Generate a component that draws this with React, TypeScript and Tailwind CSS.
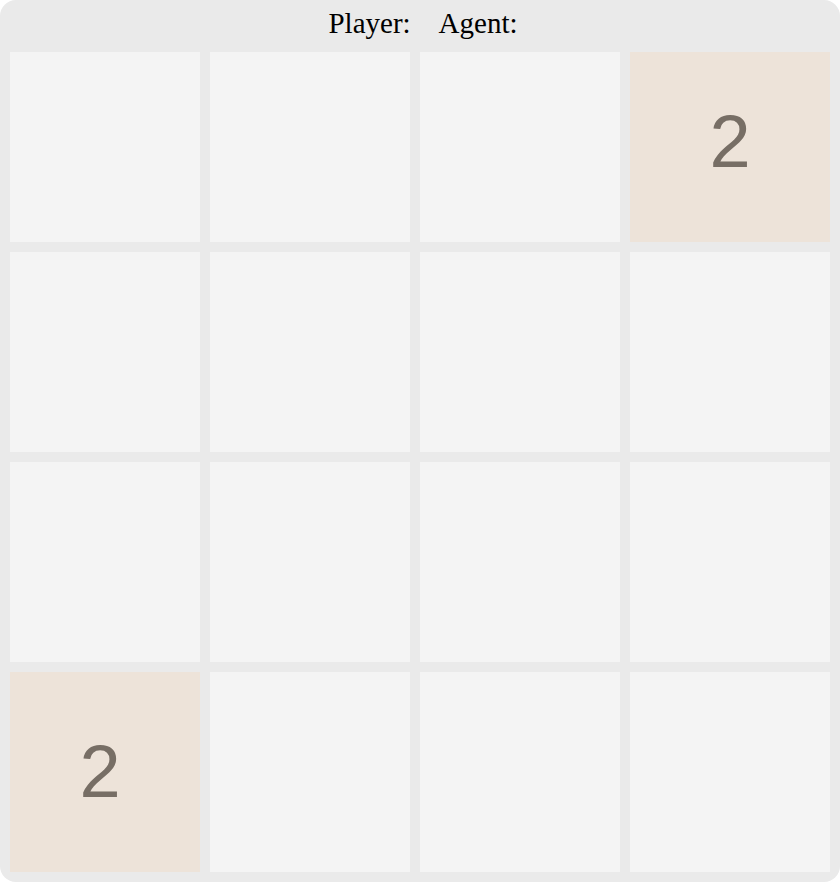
const board: number[][] = [
  [0, 0, 0, 2],
  [0, 0, 0, 0],
  [0, 0, 0, 0],
  [2, 0, 0, 0],
]

const Tile = ({ value, row, col }: { value: number; row: number; col: number }) => {
  return (
    <div
      className={
        "flex items-center justify-center" +
        (value ? " bg-[#ede3d9]" : " bg-[#f4f4f4]") +
        (col === 0 ? " pr-[10px]" : "") +
        (row === 0 ? " pb-[10px]" : "")
      }
    >
      {value ? (
        <span className="text-[74px] leading-none text-[#776e65] font-['Liberation_Sans',Arial,sans-serif]">
          {value}
        </span>
      ) : null}
    </div>
  )
}

const App = () => {
  return (
    <div className="w-[840px] bg-white">
      <div className="w-[840px] bg-[#eaeaea] rounded-[16px] pb-[10px]">
        {/* header */}
        <div className="h-[52px] pt-[8px] pl-[6px] flex justify-center gap-[28px] text-[29px] leading-[30px] text-black font-['Liberation_Serif','Times_New_Roman',serif]">
          <span>Player:</span>
          <span>Agent:</span>
        </div>

        {/* board */}
        <div className="grid grid-cols-[190px_200px_200px_200px] grid-rows-[190px_200px_200px_200px] gap-[10px] pl-[10px]">
          {board.map((r, i) =>
            r.map((v, j) => <Tile key={i + "-" + j} value={v} row={i} col={j} />)
          )}
        </div>
      </div>
    </div>
  )
}

export default App
